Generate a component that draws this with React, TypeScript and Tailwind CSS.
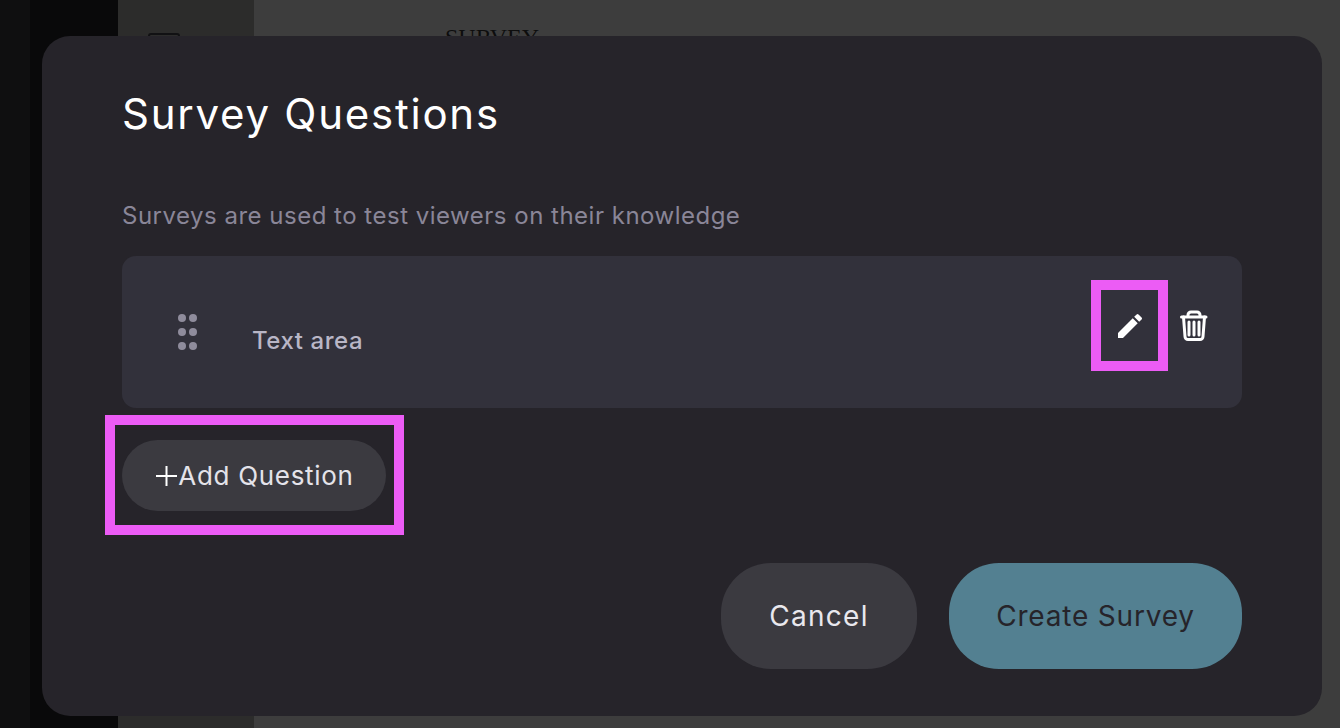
import { MdEdit } from "react-icons/md";

export default function App() {
  return (
    <div className="relative flex h-[728px] w-[1340px] overflow-hidden bg-[#3d3d3d] font-['Inter','Noto_Sans',sans-serif]">
      {/* page behind the dialog */}
      <div className="h-full w-[30px] shrink-0 bg-[#0f0f10]" />
      <div className="h-full w-[88px] shrink-0 bg-[#09090a]" />
      <aside className="h-full w-[136px] shrink-0 bg-[#2c2c2b] pl-[30px] pt-[33px]">
        <div className="h-[24px] w-[32px] rounded-[3px] border-2 border-[#111113]" />
      </aside>
      <main className="h-full flex-1 pl-[191px] pt-[23px]">
        <div className="font-['Liberation_Serif',serif] text-[24px] leading-[28px] text-[#0d0d0d]">SURVEY</div>
      </main>

      {/* dialog */}
      <div className="absolute left-[42px] top-[36px] flex h-[680px] w-[1280px] flex-col rounded-[28px] bg-[#26242a] px-[80px]">
        <h1 className="mt-[50px] text-[42px] font-normal leading-[56px] tracking-[1.75px] text-white">Survey Questions</h1>
        <p className="mt-[58px] text-[24px] leading-[32px] tracking-[0.5px] text-[#8a8698]">
          Surveys are used to test viewers on their knowledge
        </p>
        <div className="mt-[24px] flex h-[152px] items-start rounded-[14px] bg-[#32313b]">
          <svg className="ml-[54px] mt-[56px] shrink-0" width="24" height="40" viewBox="0 0 24 40" fill="#8f8c9c">
            <circle cx="6" cy="6" r="4" />
            <circle cx="17" cy="6" r="4" />
            <circle cx="6" cy="20" r="4" />
            <circle cx="17" cy="20" r="4" />
            <circle cx="6" cy="34" r="4" />
            <circle cx="17" cy="34" r="4" />
          </svg>
          <span className="ml-[52px] mt-[67px] text-[24px] font-medium leading-[36px] tracking-[0.55px] text-[#b9b6c6]">Text area</span>
          <div className="ml-auto mr-[34px] mt-[54px] flex items-start text-white">
            <MdEdit size={32} className="mr-[34px]" />
            <svg width="28" height="31" viewBox="0 0 28 31" fill="none" stroke="#ffffff" strokeWidth="3" strokeLinecap="round" strokeLinejoin="round">
              <path d="M1.5 7H26" />
              <path d="M8 6V5a3 3 0 0 1 3-3h6a3 3 0 0 1 3 3v1" />
              <path d="M3.5 7L5 26.5a3 3 0 0 0 3 3h12a3 3 0 0 0 3-3L24.5 7" />
              <path d="M9 12V25M14 12V25M19 12V25" />
            </svg>
          </div>
        </div>
        <button className="mt-[32px] flex h-[71px] w-[264px] items-center justify-center rounded-full bg-[#3b3a40] pl-[2px] text-[26px] leading-[36px] tracking-[0.7px] text-[#e4e3ea]">
          <svg className="shrink-0" width="22" height="22" viewBox="0 0 22 22" fill="none" stroke="#ffffff" strokeWidth="2">
            <path d="M0 11h21M10.5 1v20" />
          </svg>
          <span>Add Question</span>
        </button>
        <div className="mt-[52px] flex justify-end gap-[32px]">
          <button className="h-[106px] w-[196px] rounded-[50px] bg-[#3b3a40] text-[28px] tracking-[1.3px] text-[#e9e8ee]">Cancel</button>
          <button className="h-[106px] w-[293px] rounded-[50px] bg-[#538091] text-[28px] tracking-[0.8px] text-[#26242a]">Create Survey</button>
        </div>
      </div>

      {/* annotation boxes */}
      <div className="absolute left-[1091px] top-[280px] h-[91px] w-[77px] border-[10px] border-[#ec5cf5]" />
      <div className="absolute left-[105px] top-[415px] h-[120px] w-[299px] border-[10px] border-[#ec5cf5]" />
    </div>
  );
}
